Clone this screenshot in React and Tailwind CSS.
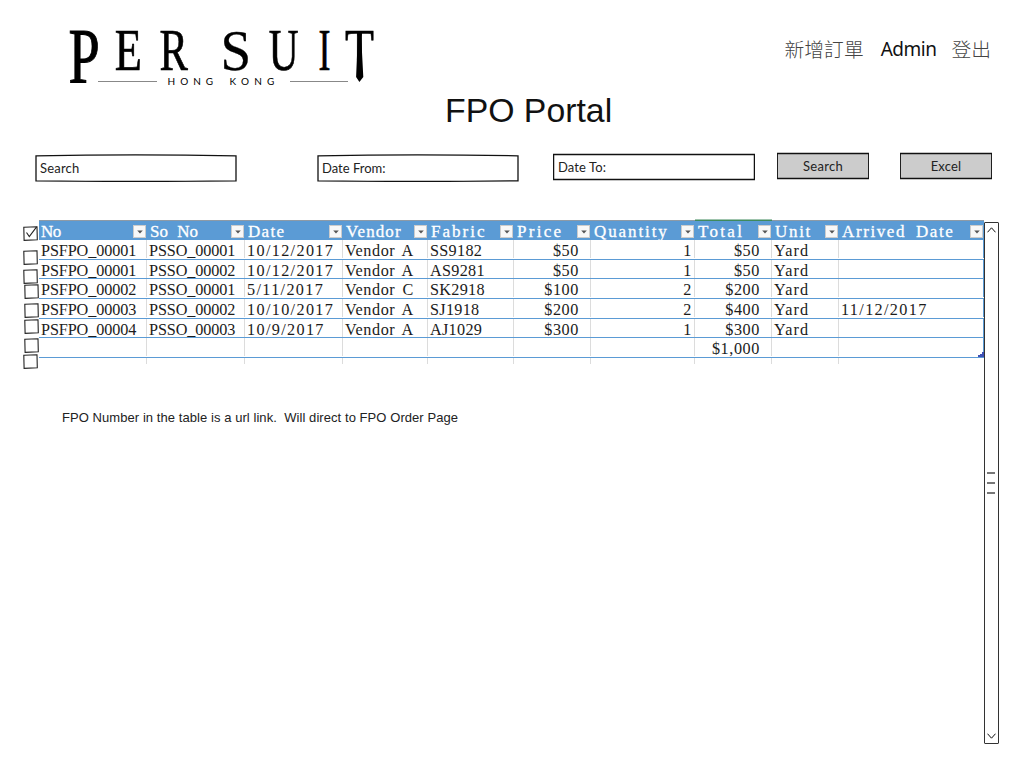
import React from "react";

const COLUMNS = [
  { key: "no", label: "No", head: "tracking-[-0.6px]", body: "tracking-[-0.1px]" },
  { key: "so", label: "So No", head: "tracking-[0px] [word-spacing:5px]", body: "tracking-[-0.1px]" },
  { key: "date", label: "Date", head: "tracking-[1.3px]", body: "tracking-[1.35px]" },
  { key: "vendor", label: "Vendor", head: "tracking-[1.1px]", body: "tracking-[0.6px] [word-spacing:2.5px]" },
  { key: "fabric", label: "Fabric", head: "tracking-[2px]", body: "tracking-[0.3px]" },
  { key: "price", label: "Price", head: "tracking-[2.3px]", body: "tracking-[0.6px] text-right pr-[11px]" },
  { key: "qty", label: "Quantity", head: "tracking-[1.9px]", body: "tracking-[0.6px] text-right pr-[2px]" },
  { key: "total", label: "Total", head: "tracking-[2.3px]", body: "tracking-[0.6px] text-right pr-[11px]" },
  { key: "unit", label: "Unit", head: "tracking-[1.7px]", body: "tracking-[1.1px]" },
  { key: "arrived", label: "Arrived Date", head: "tracking-[1.6px] [word-spacing:4px]", body: "tracking-[1.35px]" },
];

const GRID =
  "grid grid-cols-[108px_98px_98px_85px_86px_77px_104px_77px_67px_145px]";

const ROWS = [
  { h: "h-[20px]", cells: ["PSFPO_00001", "PSSO_00001", "10/12/2017", "Vendor A", "SS9182", "$50", "1", "$50", "Yard", ""] },
  { h: "h-[19px]", cells: ["PSFPO_00001", "PSSO_00002", "10/12/2017", "Vendor A", "AS9281", "$50", "1", "$50", "Yard", ""] },
  { h: "h-[20px]", cells: ["PSFPO_00002", "PSSO_00001", "5/11/2017", "Vendor C", "SK2918", "$100", "2", "$200", "Yard", ""] },
  { h: "h-[20px]", cells: ["PSFPO_00003", "PSSO_00002", "10/10/2017", "Vendor A", "SJ1918", "$200", "2", "$400", "Yard", "11/12/2017"] },
  { h: "h-[19px]", cells: ["PSFPO_00004", "PSSO_00003", "10/9/2017", "Vendor A", "AJ1029", "$300", "1", "$300", "Yard", ""] },
  { h: "h-[20px]", cells: ["", "", "", "", "", "", "", "$1,000", "", ""] },
];

const CHECKS = [
  { gap: "mt-[6px]", checked: true },
  { gap: "mt-[9px]" },
  { gap: "mt-[4px]" },
  { gap: "mt-0 ml-px" },
  { gap: "mt-[4px] ml-px" },
  { gap: "mt-[1px] ml-px" },
  { gap: "mt-[4px] ml-px" },
  { gap: "mt-[1px]" },
];

function Logo() {
  return (
    <svg width="400" height="90" viewBox="0 0 400 90" className="block" fontFamily='"Liberation Serif", serif' fill="#000">
      <defs>
        <clipPath id="bar"><rect x="-2" y="-60" width="60" height="50" /></clipPath>
      </defs>
      <g stroke="#000" strokeWidth=".7">
        <text transform="translate(68.5 82) scale(.72 1)" fontSize="78" strokeWidth="1">P</text>
        <text transform="translate(114.8 70) scale(.74 1)" fontSize="60">E</text>
        <text transform="translate(159.5 70) scale(.71 1)" fontSize="60">R</text>
        <text transform="translate(220.5 69.5) scale(.95 1)" fontSize="58" strokeWidth=".3">S</text>
        <text transform="translate(268.8 69.5) scale(.7 1)" fontSize="59">U</text>
        <text transform="translate(318.5 70) scale(.6 1)" fontSize="60">I</text>
        <text transform="translate(345 70) scale(.79 1)" fontSize="60" clipPath="url(#bar)">T</text>
      </g>
      <path d="M356.6 31h5.8l-1.2 6 2.1 40-3.9 5-3.3-5 1.7-40z" />
      <path d="M98 81.5h59M290 81.5h58" stroke="#888" />
      <g fontFamily="Lato, sans-serif" fontSize="10">
        <text x="167.6" y="85" letterSpacing="5">HONG</text>
        <text x="229.6" y="85" letterSpacing="5.2">KONG</text>
      </g>
    </svg>
  );
}

function SketchBox({ fill, bow, children, className }) {
  return (
    <div className={"relative flex h-[28px] items-center font-['Lato',sans-serif] text-[13px] text-[#222] " + className}>
      <svg className="absolute inset-0 h-full w-full" viewBox="0 0 202 28" preserveAspectRatio="none">
        <path
          d={bow ? "M1 1.8Q100 0 201 1.8V26.8Q100 28 1 26.8Z" : "M.6 1.5H201.4V26.5H.6Z"}
          fill={fill}
          stroke="#111"
          strokeWidth="1.3"
          vectorEffect="non-scaling-stroke"
        />
      </svg>
      <span className="relative pt-[2px]">{children}</span>
    </div>
  );
}

function Checkbox({ gap, checked }) {
  return (
    <svg width="15" height="15" viewBox="0 0 15 15" className={"block shrink-0 " + gap} fill="none" stroke="#222" strokeWidth="1.1">
      <path d="M.8 1.2 14 .8 14.3 13.7 1.1 14.4Z" fill="#fff" />
      {checked && <path d="M3.5 6.5 6.3 10.5 13.6 .8" />}
    </svg>
  );
}

function FilterButton() {
  return (
    <span className="mr-px mt-[2px] flex h-[13px] w-[13px] shrink-0 items-center justify-center border border-[#ccc] bg-[#f8f8f8]">
      <svg width="6" height="4" viewBox="0 0 6 4"><path d="M.2.5h5.6L3 3.5z" fill="#555" /></svg>
    </span>
  );
}

function OrderTable() {
  return (
    <div className="relative w-[945px] font-['Liberation_Serif',serif]">
      <div className={GRID + " h-[20px] border-t border-[#8e9aa6] bg-[#5b9bd5]"}>
        {COLUMNS.map((c) => (
          <div
            key={c.key}
            className={
              "flex h-[19px] items-center justify-between " +
              (c.key === "no" ? "pl-[2px]" : "pl-[3px]") +
              (c.key === "total" ? " shadow-[0_-1.5px_0_#3f8a5c]" : "")
            }
          >
            <span className={"whitespace-nowrap pt-[3px] text-[17px] leading-[16px] text-white [-webkit-text-stroke:0.3px_white] " + c.head}>{c.label}</span>
            <FilterButton />
          </div>
        ))}
      </div>
      {ROWS.map((r, i) => (
        <div key={i} className={GRID + " border-b border-[#5b9bd5] " + r.h}>
          {r.cells.map((v, j) => (
            <div
              key={j}
              className={
                "h-[18px] whitespace-nowrap border-r border-[#dcdcdc] pl-[2px] text-[16.2px] leading-[23px] text-[#1c1c1c] last:border-r-[#5b9bd5] " +
                COLUMNS[j].body
              }
            >
              {v}
            </div>
          ))}
        </div>
      ))}
      <div className={GRID + " h-[6px]"}>
        {COLUMNS.map((c) => (
          <div key={c.key} className="border-r border-[#dcdcdc] last:border-r-0" />
        ))}
      </div>
      <svg className="absolute bottom-[7px] right-0" width="6" height="5" viewBox="0 0 6 5">
        <path d="M4 0h2v5H0V3h2V2h2z" fill="#3f51b5" />
      </svg>
    </div>
  );
}

function Scrollbar() {
  return (
    <div className="mt-[2px] flex h-[522px] w-[15px] flex-col items-center justify-between rounded-[1px] border-[1.5px] border-[#333] bg-white py-[4px]">
      <svg width="9" height="6" viewBox="0 0 9 6" className="-ml-px" fill="none" stroke="#111"><path d="M.5 5.3 4.5.8 8.5 5.3" /></svg>
      <div className="-ml-[2px] flex flex-col gap-[8px]">
        <div className="h-[2px] w-[8px] bg-[#777]" />
        <div className="h-[2px] w-[8px] bg-[#777]" />
        <div className="h-[2px] w-[8px] bg-[#777]" />
      </div>
      <svg width="9" height="6" viewBox="0 0 9 6" className="-ml-px" fill="none" stroke="#111"><path d="M.5.7 4.5 5.2 8.5.7" /></svg>
    </div>
  );
}

export default function App() {
  return (
    <div className="h-[766px] w-[1022px] overflow-hidden bg-white text-black">
      <header className="flex h-[90px] items-start justify-between pr-[31px]">
        <Logo />
        <nav className="flex items-center pt-[35px] font-['Noto_Sans_CJK_TC',sans-serif] text-[19.8px] font-light leading-[28px] text-[#444]">
          <span>新增訂單</span>
          <span className="ml-[17px] mr-[15px] font-['Noto_Sans',sans-serif] text-[19px] font-normal tracking-[-0.5px] text-[#111]">Admin</span>
          <span>登出</span>
        </nav>
      </header>
      <h1 className="h-[64px] pl-[445px] font-['Liberation_Sans',sans-serif] text-[33.8px] leading-[40px] text-[#111]">FPO Portal</h1>
      <div className="flex h-[66px] items-start pl-[35px]">
        <SketchBox bow fill="#fff" className="w-[202px] pl-[5px] tracking-[0.2px]">Search</SketchBox>
        <SketchBox bow fill="#fff" className="ml-[80px] w-[202px] pl-[5px]">Date From:</SketchBox>
        <SketchBox fill="#fff" className="-mt-px ml-[34px] w-[202px] pl-[5px] tracking-[0.1px]">Date To:</SketchBox>
        <SketchBox fill="#ccc" className="-mt-[2px] ml-[22px] w-[92px] justify-center tracking-[0.3px]">Search</SketchBox>
        <SketchBox fill="#ccc" className="-mt-[2px] ml-[31px] w-[92px] justify-center tracking-[0.2px]">Excel</SketchBox>
      </div>
      <main className="flex items-start pl-[23px]">
        <div className="flex w-[16px] flex-col">
          {CHECKS.map((c, i) => <Checkbox key={i} {...c} />)}
        </div>
        <div className="w-[945px]">
          <OrderTable />
          <p className="mt-[44px] whitespace-pre pl-[23px] font-['Liberation_Sans',sans-serif] text-[13px] leading-[20px] tracking-[0.065px] text-[#222]">
            {"FPO Number in the table is a url link.  Will direct to FPO Order Page"}
          </p>
        </div>
        <Scrollbar />
      </main>
    </div>
  );
}
